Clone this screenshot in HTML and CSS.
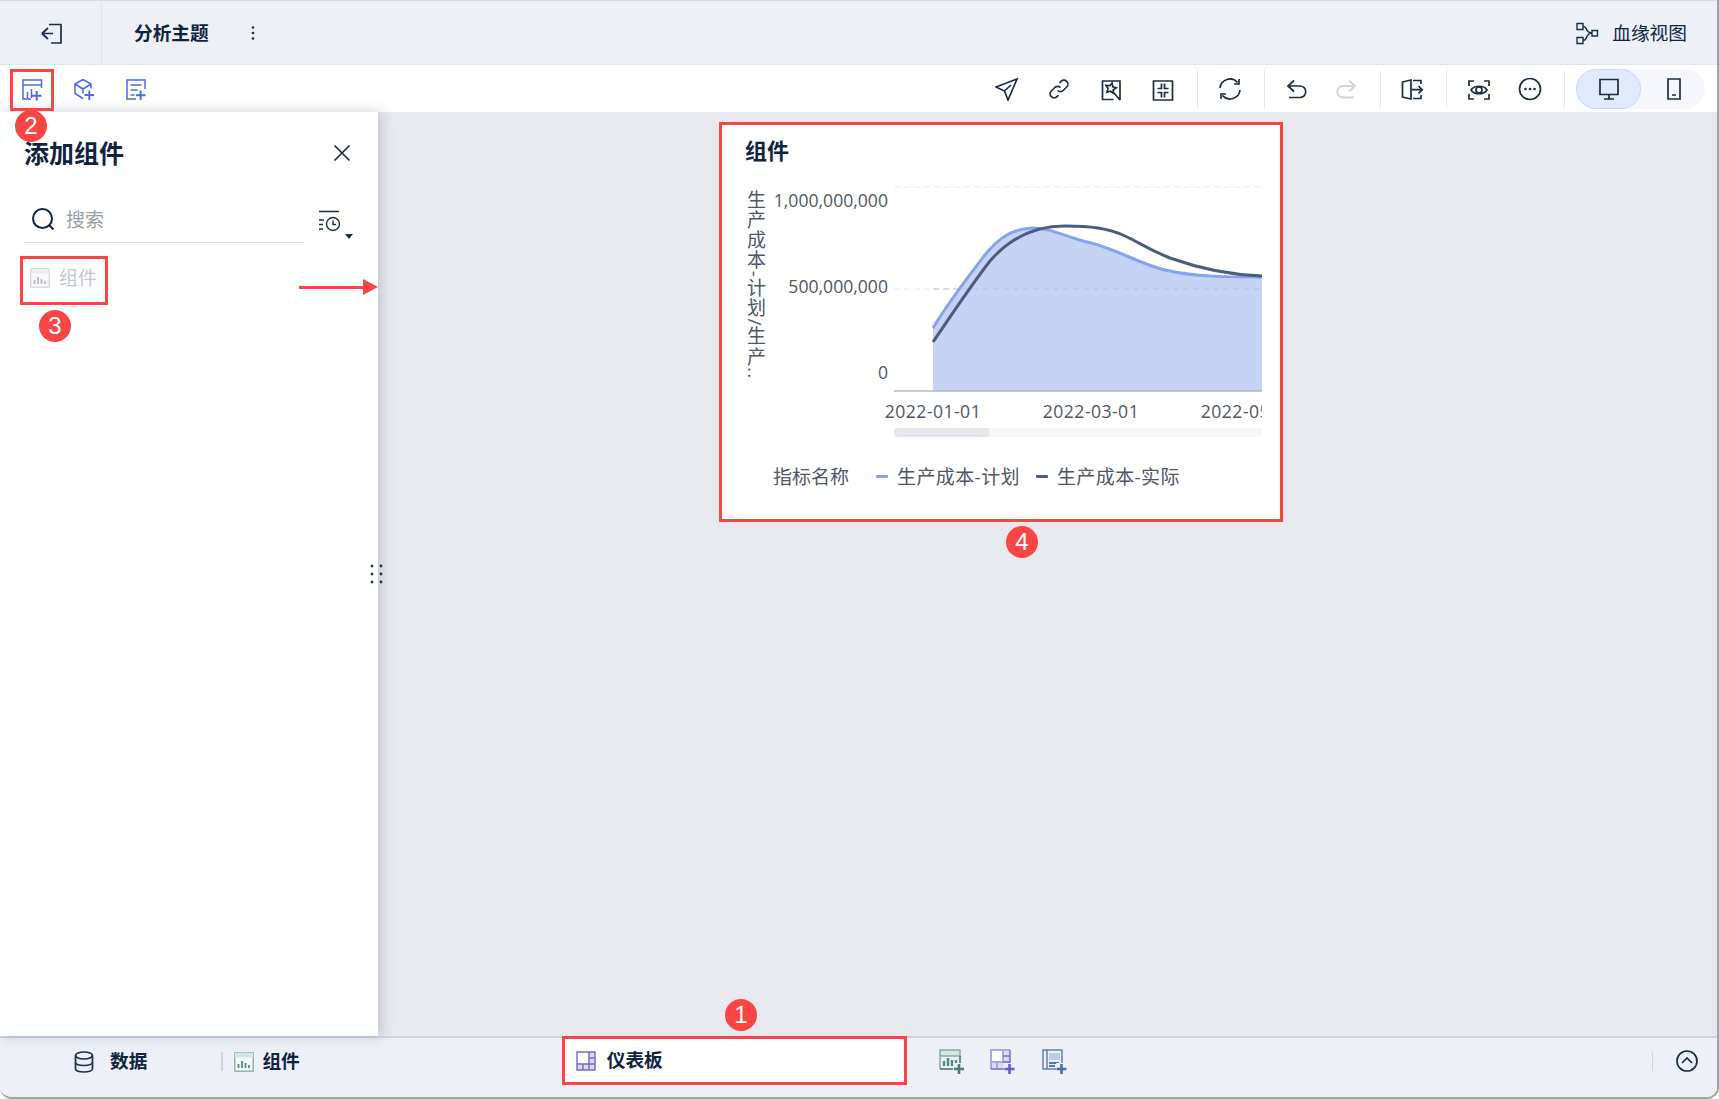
FILE: index.html
```html
<!DOCTYPE html>
<html lang="zh-CN">
<head>
<meta charset="utf-8">
<title>分析主题</title>
<link rel="stylesheet" href="styles.css">
</head>
<body>
<div class="app">
  <header class="topbar">
    <div class="back-cell">
      <svg class="ic24" viewBox="0 0 24 24"><path class="s-dark" d="M10 3.500h12v18.500H12M3 12.500l6-5.500M3 12.500l6 5.500M3 12.500h11"/></svg>
    </div>
    <div class="theme-title">分析主题</div>
    <svg class="kebab" viewBox="0 0 4 16"><circle cx="2" cy="2.500" r="1.300"/><circle cx="2" cy="8" r="1.300"/><circle cx="2" cy="13.500" r="1.300"/></svg>
    <div class="lineage">
      <svg class="ic24" viewBox="0 0 24 24"><path class="s-thin" d="M2 2.500h6v6H2zM2 16.500h6v6H2zM17 9.500h5.500v5.500H17zM8 5.500c5 0 2 6.500 9 6.500M8 19.500c5 0 2-7.500 9-7.500"/></svg>
      <span>血缘视图</span>
    </div>
  </header>

  <nav class="toolbar">
    <div class="tool-left">
      <svg class="ic24" viewBox="0 0 24 24"><path class="s-blue" d="M21.500 11V3H3v19h8M3 8h18.500M7.500 21v-6M11.500 21v-9"/><path class="s-blue-plus" d="M12 18.700h9.500M16.700 14v9.500"/></svg>
      <svg class="ic24" viewBox="0 0 24 24"><path class="s-blue" d="M11 2.500L3 7v9.500l8 5M11 2.500l8 4.500v4.500M3 7l8 5 8-5M11 12v4.500"/><path class="s-blue-plus" d="M12.500 18h9.500M17.300 13.500V23"/></svg>
      <svg class="ic24" viewBox="0 0 24 24"><path class="s-blue" d="M12 22H3V3h18v9M6.500 8h11M6.500 13h7M6.500 18h4"/><path class="s-blue-plus" d="M12 18.300h9.500M16.700 13.500V23"/></svg>
    </div>
    <div class="tool-right">
      <div class="tool-group">
        <svg class="ic24" viewBox="0 0 24 24"><path class="s-dark" d="M1 10L22 2l-9 21-3.500-9zM9.500 14L16 8"/></svg>
        <svg class="ic24" viewBox="0 0 24 24"><path class="s-dark" d="M10.500 13.500a4 4 0 0 0 5.700 0l3.500-3.500a4 4 0 0 0-5.700-5.700l-1.500 1.500M13.500 10.500a4 4 0 0 0-5.700 0l-3.500 3.500a4 4 0 0 0 5.700 5.700l1.500-1.500"/></svg>
        <svg class="ic24" viewBox="0 0 24 24"><path class="s-dark" d="M14.500 22.500H3.500V4H21v18.500h-1M13 6l.8 3.700 3.500 1-3 2 .2 3.500-3-2-3.500 1 1-3.700-2-3 3.700.2zM15 16l6 7"/></svg>
        <svg class="ic24" viewBox="0 0 24 24"><path class="s-dark" d="M2.500 4h19v19h-19zM10.500 6.500v5h-4M13.500 6.500v5h4M10.500 20.500v-5h-4M13.500 20.500v-5h4"/></svg>
      </div>
      <i class="tool-sep tool-sep-first"></i>
      <div class="tool-group">
        <svg class="ic24" viewBox="0 0 24 24"><path class="s-dark" d="M2 11a10 10 0 0 1 17.500-5.500M22 13a10 10 0 0 1-17.500 5.500M21 2v5h-5M3 22v-5h5"/></svg>
      </div>
      <i class="tool-sep"></i>
      <div class="tool-group tool-group-narrow">
        <svg class="ic24" viewBox="0 0 24 24"><path class="s-dark" d="M10 3.500L4 9l6 5.500M4 9h12a5.750 5.750 0 0 1 0 11.500H5"/></svg>
        <svg class="ic24" viewBox="0 0 24 24"><path class="s-off" d="M15 3.500L21 9l-6 5.500M21 9H9a5.750 5.750 0 0 0 0 11.500h11"/></svg>
      </div>
      <i class="tool-sep"></i>
      <div class="tool-group">
        <svg class="ic24" viewBox="0 0 24 24"><path class="s-dark" d="M2.500 5L11 3v19l-8.500-2zM13 3.500h8V7M13 21.500h8V18M11 12.700h11M18.500 9l3.700 3.700-3.700 3.700"/></svg>
      </div>
      <i class="tool-sep"></i>
      <div class="tool-group">
        <svg class="ic24" viewBox="0 0 24 24"><path class="s-dark" d="M3 9V4h5M18 4h5v5M23 17v5h-5M8 22H3v-5M5 13c3-5 13-5 16 0-3 5-13 5-16 0z"/><circle class="s-dark" cx="13" cy="13" r="3"/></svg>
        <svg class="ic24" viewBox="0 0 24 24"><circle class="s-dark" cx="12" cy="12" r="10.500"/><circle class="f-dark" cx="7.500" cy="12" r="1.300"/><circle class="f-dark" cx="12" cy="12" r="1.300"/><circle class="f-dark" cx="16.500" cy="12" r="1.300"/></svg>
      </div>
      <i class="tool-sep tool-sep-end"></i>
      <div class="device-switch">
        <div class="device device-on">
          <svg class="ic24" viewBox="0 0 24 24"><path class="s-dark" d="M3 2.500h18v15H3zM12 17.500v4.500M7 22h10"/></svg>
        </div>
        <div class="device">
          <svg class="ic24" viewBox="0 0 24 24"><path class="s-dark" d="M6 2h12v20H6zM10 18h4"/></svg>
        </div>
      </div>
    </div>
  </nav>

  <main class="workspace">
    <aside class="sidebar">
      <div class="side-head">
        <h2 class="side-title">添加组件</h2>
        <svg class="close" viewBox="0 0 22 22"><path class="s-dark" d="M3.500 3.500l15 15M18.500 3.500l-15 15"/></svg>
      </div>
      <div class="search-row">
        <div class="search">
          <svg class="ic24" viewBox="0 0 24 24"><circle class="s-search" cx="11.500" cy="11.500" r="9.500"/><path class="s-search" d="M18.500 18.500l4 4"/></svg>
          <span class="placeholder">搜索</span>
        </div>
        <svg class="history" viewBox="0 0 36 30"><path class="s-thin" d="M1 1.500h20M1 10h5M1 14.500h4M1 19h4"/><circle class="s-thin" cx="15" cy="14" r="6.500"/><path class="s-thin" d="M15 10.500V14.500h3"/><path class="f-dark" d="M27 24h8l-4 5z"/></svg>
      </div>
      <div class="comp-row">
        <svg class="comp-ic" viewBox="0 0 20 20"><rect class="c-frame" x=".8" y=".8" width="18.400" height="18.400"/><path class="c-head" d="M.8 .8h18.400v4.700H.8z"/><path class="c-bars" d="M4.500 16v-4M8 16v-7M11.500 16v-5M15 16v-3"/></svg>
        <span>组件</span>
      </div>
      <svg class="drag" viewBox="0 0 13 20"><circle cx="2" cy="2" r="1.400"/><circle cx="11" cy="2" r="1.400"/><circle cx="2" cy="10" r="1.400"/><circle cx="11" cy="10" r="1.400"/><circle cx="2" cy="18" r="1.400"/><circle cx="11" cy="18" r="1.400"/></svg>
    </aside>

    <section class="canvas">
      <article class="card">
        <h3 class="card-title">组件</h3>
        <svg class="chart" viewBox="722 167 558 290">
          <defs><clipPath id="plotclip"><rect x="780" y="167" width="482" height="290"/></clipPath></defs>
          <path class="grid" d="M894 187H1262M894 289H1262"/>
          <text class="axis-name" x="755" y="190">生产成本-计划/生产..</text>
          <text class="tick" x="888" y="207">1,000,000,000</text>
          <text class="tick" x="888" y="293">500,000,000</text>
          <text class="tick" x="888" y="379">0</text>
          <path class="area" d="M933 328C950 300 968 277 985 255C1000 236 1014 229 1032 228C1052 228 1068 238 1091 243C1118 250 1140 264 1165 270C1195 277 1230 277 1262 277V391H933Z"/>
          <path class="grid grid-over" d="M933 289H1262"/>
          <path class="baseline" d="M894 391H1262"/>
          <path class="line-plan" d="M933 328C950 300 968 277 985 255C1000 236 1014 229 1032 228C1052 228 1068 238 1091 243C1118 250 1140 264 1165 270C1195 277 1230 277 1262 277"/>
          <path class="line-real" d="M933 342C952 314 972 284 990 261C1010 238 1036 226 1065 226C1090 226 1108 228 1125 236C1140 243 1150 250 1170 258C1198 268 1230 275 1262 276"/>
          <g clip-path="url(#plotclip)">
            <text class="tick tick-mid" x="933" y="418">2022-01-01</text>
            <text class="tick tick-mid" x="1091" y="418">2022-03-01</text>
            <text class="tick tick-mid" x="1249" y="418">2022-05-01</text>
          </g>
          <rect class="scroll-track" x="894" y="428" width="368" height="9" rx="3"/>
          <rect class="scroll-thumb" x="894" y="428" width="95" height="9" rx="3"/>
        </svg>
        <div class="legend">
          <span class="legend-name">指标名称</span>
          <i class="dash dash-plan"></i><span class="legend-a">生产成本-计划</span>
          <i class="dash dash-real"></i><span class="legend-b">生产成本-实际</span>
        </div>
      </article>
    </section>
  </main>

  <footer class="bottombar">
    <div class="tab-data">
      <svg class="ic24" viewBox="0 0 24 24"><ellipse class="s-dark" cx="12" cy="5.500" rx="8.500" ry="3.500"/><path class="s-dark" d="M3.500 5.500v13c0 2 3.500 3.500 8.500 3.500s8.500-1.500 8.500-3.500v-13M3.500 12c0 2 3.500 3.500 8.500 3.500s8.500-1.500 8.500-3.500"/></svg>
      <span>数据</span>
    </div>
    <i class="bot-sep"></i>
    <div class="tab-comp">
      <svg class="ic20" viewBox="0 0 20 20"><rect class="t-frame" x=".8" y=".8" width="18.400" height="18.400"/><path class="t-head" d="M.8 .8h18.400v4.700H.8z"/><path class="t-bars" d="M4.500 16v-4M8 16v-7M11.500 16v-5M15 16v-3"/></svg>
      <span>组件</span>
    </div>
    <div class="tab-dash">
      <svg class="ic20" viewBox="0 0 20 20"><path class="d-fill" d="M1 1h18v18H1z"/><path class="d-white" d="M1 1h12v12H1z"/><path class="d-line" d="M1 1h18v18H1zM13 1v12M1 13h18M13 7h6M7 13v6M13 13v6"/></svg>
      <span>仪表板</span>
    </div>
    <div class="add-icons">
      <svg class="ic28" viewBox="0 0 28 28"><path class="t-head" d="M2 2h20v6H2z"/><path class="t-top" d="M2 21V2h20v6H2"/><path class="t-base" d="M2 21h14M22 8v8"/><path class="t-bars2" d="M6 18v-5M10 18V10M14 18v-6M18 15v-3"/><path class="halo" d="M15 15h11v11H15z"/><path class="t-plus" d="M16 21h10M21 16v10"/></svg>
      <svg class="ic28" viewBox="0 0 28 28"><path class="d-fill" d="M2 2h19v19H2z"/><path class="d-white" d="M2 2h12v12H2z"/><path class="d-soft" d="M2 21V2h19M14 2v12M2 14h12M8 14v7"/><path class="d-line" d="M2 21h13M21 2v13M14 8h7M14 14h7"/><path class="halo" d="M15 15h11v11H15z"/><path class="d-plus" d="M15.500 21h10M20.500 16v10"/></svg>
      <svg class="ic28" viewBox="0 0 28 28"><path class="r-fill" d="M8 5h11v7H8z"/><path class="r-line" d="M15 21H2V2h19v13M6 2v19"/><path class="r-row" d="M8 15h10M8 18h6"/><path class="halo" d="M15 15h11v11H15z"/><path class="r-plus" d="M15.500 21h10M20.500 16v10"/></svg>
    </div>
    <i class="bot-sep bot-sep-right"></i>
    <svg class="collapse" viewBox="0 0 22 22"><circle class="s-dark" cx="11" cy="11" r="10"/><path class="s-dark" d="M6 13l5-5 5 5"/></svg>
  </footer>

  <div class="marks">
    <div class="frame frame-2"></div>
    <div class="frame frame-3"></div>
    <div class="badge badge-1">1</div>
    <div class="badge badge-2">2</div>
    <div class="badge badge-3">3</div>
    <div class="badge badge-4">4</div>
    <div class="arrow"></div>
  </div>
</div>
</body>
</html>
```

FILE: styles.css
```css
* { box-sizing: border-box; }
html, body { margin: 0; padding: 0; background: #fff; }
body {
  width: 1719px;
  height: 1099px;
  overflow: hidden;
  font-family: "Open Sans", "Noto Sans CJK SC", sans-serif;
  color: #10233f;
}
.app {
  position: relative;
  width: 1719px;
  height: 1099px;
  display: flex;
  flex-direction: column;
  border-right: 2px solid #a3a3a3;
  border-bottom: 2px solid #a3a3a3;
  border-radius: 0 0 12px 12px;
  overflow: hidden;
}
svg { display: block; flex: none; fill: none; }
.ic24 { width: 24px; height: 24px; }
.ic20 { width: 20px; height: 20px; }
.ic28 { width: 28px; height: 28px; }
.s-dark { fill: none; stroke: #1b2c47; stroke-width: 1.7; }
.f-dark { fill: #1b2c47; }
.s-thin { fill: none; stroke: #1b2c47; stroke-width: 1.4; }
.s-off { fill: none; stroke: #d0d4dc; stroke-width: 2; }
.s-blue { fill: none; stroke: #4a6ae8; stroke-width: 1.5; }
.s-blue-plus { fill: none; stroke: #4a6ae8; stroke-width: 1.9; }
.s-search { fill: none; stroke: #10233f; stroke-width: 2; }

/* top */
.topbar {
  height: 65px;
  flex: none;
  display: flex;
  align-items: center;
  background: #edf0f6;
  border-top: 1px solid #d9dde3;
  border-bottom: 1px solid #e0e4ec;
}
.back-cell {
  width: 102px;
  height: 100%;
  display: flex;
  align-items: center;
  justify-content: center;
  border-right: 1px solid #e2e5ec;
}
.theme-title { margin-left: 32px; padding-bottom: 2px; font-size: 18.700px; font-weight: 700; }
.kebab { width: 4px; height: 16px; margin-left: 42px; fill: #1b2c47; }
.lineage { margin-left: auto; margin-right: 30px; display: flex; align-items: center; gap: 13px; font-size: 18.700px; }
.lineage span { padding-bottom: 2px; }

.toolbar {
  height: 47px;
  flex: none;
  display: flex;
  align-items: center;
  justify-content: space-between;
  background: #fff;
  padding: 0 12px 0 20px;
}
.tool-left, .tool-group { display: flex; gap: 28px; align-items: center; }
.tool-group-narrow { gap: 26px; }
.tool-right { display: flex; align-items: center; }
.tool-sep { width: 1px; height: 39px; margin: 0 19px 0 22px; background: #e6e8ed; }
.tool-sep-first { margin-right: 20px; }
.tool-sep-end { margin-right: 11px; }
.device-switch { width: 129px; height: 40px; display: flex; background: #f5f7fc; border-radius: 20px; }
.device { width: 64px; display: flex; align-items: center; justify-content: center; padding-left: 1px; }
.device-on { width: 65px; background: #e0eafc; border: 1px solid #c6d8f8; border-radius: 20px; }

/* workspace */
.workspace { flex: 1; min-height: 0; display: flex; background: #e8e9ee; }
.sidebar {
  position: relative;
  width: 378px;
  flex: none;
  background: #fff;
  box-shadow: 3px 0 12px rgba(120, 128, 150, .38);
}
.side-head { display: flex; align-items: center; justify-content: space-between; padding: 24px 25px 0 24px; }
.side-title { margin: 0; font-size: 25px; line-height: 34px; font-weight: 700; }
.close { width: 22px; height: 22px; }
.search-row { display: flex; align-items: flex-start; margin: 28px 0 0 24px; gap: 14px; }
.search {
  width: 280px;
  height: 45px;
  display: flex;
  align-items: center;
  gap: 11px;
  padding: 0 0 2px 7px;
  border-bottom: 1px solid #d9dbe2;
}
.placeholder { font-size: 19px; color: #989ea9; }
.history { width: 36px; height: 30px; margin-top: 12px; }
.comp-row { display: flex; align-items: center; gap: 9px; margin: 24px 0 0 30px; font-size: 19px; color: #c3c7cf; line-height: 22px; }
.comp-ic { width: 20px; height: 20px; }
.c-frame { fill: #fafafb; stroke: #d4d7dd; stroke-width: 1.4; }
.c-head { fill: #e9ebef; }
.c-bars { stroke: #b6bcc6; stroke-width: 1.8; }
.drag { position: absolute; left: 370px; top: 452px; width: 13px; height: 20px; fill: #2a3547; }

.canvas { flex: 1; min-width: 0; padding: 10px 0 0 341px; }
.card { width: 564px; height: 400px; background: #fff; border: 3px solid #fa4545; }
.card-title { margin: 0; padding: 10px 0 2px 23px; font-size: 22px; line-height: 30px; font-weight: 700; }
.chart { width: 558px; height: 290px; }
.grid { stroke: #e9ebee; stroke-width: 1.2; stroke-dasharray: 6 4; }
.grid-over { stroke: #b4c2e6; }
.tick { font-size: 17.600px; fill: #4f5666; text-anchor: end; }
.tick-mid { text-anchor: middle; letter-spacing: .45px; }
.axis-name { font-size: 19px; fill: #4f5666; writing-mode: vertical-rl; letter-spacing: 1.200px; }
.area { fill: #c5d3f5; }
.baseline { stroke: #b3b6c6; stroke-width: 1.4; }
.line-plan { stroke: #87a3f0; stroke-width: 3; }
.line-real { stroke: #4a5d80; stroke-width: 3; }
.scroll-track { fill: #f7f7f9; }
.scroll-thumb { fill: #e6e7ec; }
.legend { height: 38px; display: flex; align-items: center; padding-left: 51px; font-size: 19px; color: #4f5666; }
.legend-name { margin-right: 27px; }
.legend-a { margin-right: 16px; letter-spacing: .4px; }
.legend-b { letter-spacing: .4px; }
.dash { width: 12px; height: 3px; margin-right: 9px; border-radius: 1px; }
.dash-plan { background: #87a3f0; }
.dash-real { background: #4a5d80; }

/* bottom */
.bottombar {
  height: 61px;
  flex: none;
  display: flex;
  align-items: center;
  padding: 0 0 12px 72px;
  background: #edf0f6;
  border-top: 2px solid #cdd3de;
  font-size: 18.700px;
  font-weight: 700;
}
.bottombar span { padding-bottom: 4px; }
.tab-data { display: flex; align-items: center; gap: 14px; }
.bot-sep { width: 2px; height: 19px; margin-left: 74px; background: #cfd3da; }
.tab-comp { display: flex; align-items: center; gap: 8px; margin-left: 11px; }
.t-frame { fill: #f4f8f7; stroke: #8aaea8; stroke-width: 1.4; }
.t-head { fill: #d3e6e2; stroke: none; }
.t-bars { stroke: #4f8a84; stroke-width: 1.8; }
.t-top { fill: none; stroke: #8aa9a4; stroke-width: 1.5; }
.t-base { fill: none; stroke: #3f6f6a; stroke-width: 1.5; }
.t-bars2 { stroke: #4f8a84; stroke-width: 2.4; }
.t-plus { stroke: #4b7a76; stroke-width: 2.6; }
.halo { fill: #edf0f6; }
.tab-dash {
  width: 345px;
  height: 49px;
  margin: 0 0 2px 262px;
  display: flex;
  align-items: center;
  gap: 11px;
  padding-left: 11px;
  background: #fff;
  border: 3px solid #fa4545;
}
.d-fill { fill: #dcd9f5; }
.d-white { fill: #fff; }
.d-line { fill: none; stroke: #7468c4; stroke-width: 1.4; }
.d-soft { fill: none; stroke: #aea6e0; stroke-width: 2; }
.d-plus { stroke: #6a5cc0; stroke-width: 2.6; }
.r-fill { fill: #b9cbee; }
.r-line { fill: none; stroke: #5f7fb8; stroke-width: 1.5; }
.r-row { stroke: #4a78d8; stroke-width: 2; }
.r-plus { stroke: #4b6fa6; stroke-width: 2.6; }
.add-icons { display: flex; gap: 23.500px; margin-left: 31px; }
.bot-sep-right { width: 1px; margin-left: auto; }
.collapse { width: 22px; height: 22px; margin: 0 19px 2px 23px; }

/* annotation overlay */
.marks { position: absolute; inset: 0; pointer-events: none; }
.frame { position: absolute; border: 3px solid #fa4545; }
.frame-2 { left: 10px; top: 69px; width: 44px; height: 42px; }
.frame-3 { left: 20px; top: 256px; width: 88px; height: 49px; }
.badge {
  position: absolute;
  width: 32px;
  height: 32px;
  border-radius: 50%;
  background: #fa4545;
  color: #fff;
  font: 24px/32px "Liberation Sans", sans-serif;
  text-align: center;
}
.badge-1 { left: 725px; top: 999px; }
.badge-2 { left: 15px; top: 110px; }
.badge-3 { left: 39px; top: 310px; }
.badge-4 { left: 1006px; top: 526px; }
.arrow { position: absolute; left: 299px; top: 286px; width: 64px; height: 3px; background: #fa4545; }
.arrow::after {
  content: "";
  position: absolute;
  left: 64px;
  top: -7px;
  border-left: 15px solid #fa4545;
  border-top: 8px solid transparent;
  border-bottom: 8px solid transparent;
}
```
